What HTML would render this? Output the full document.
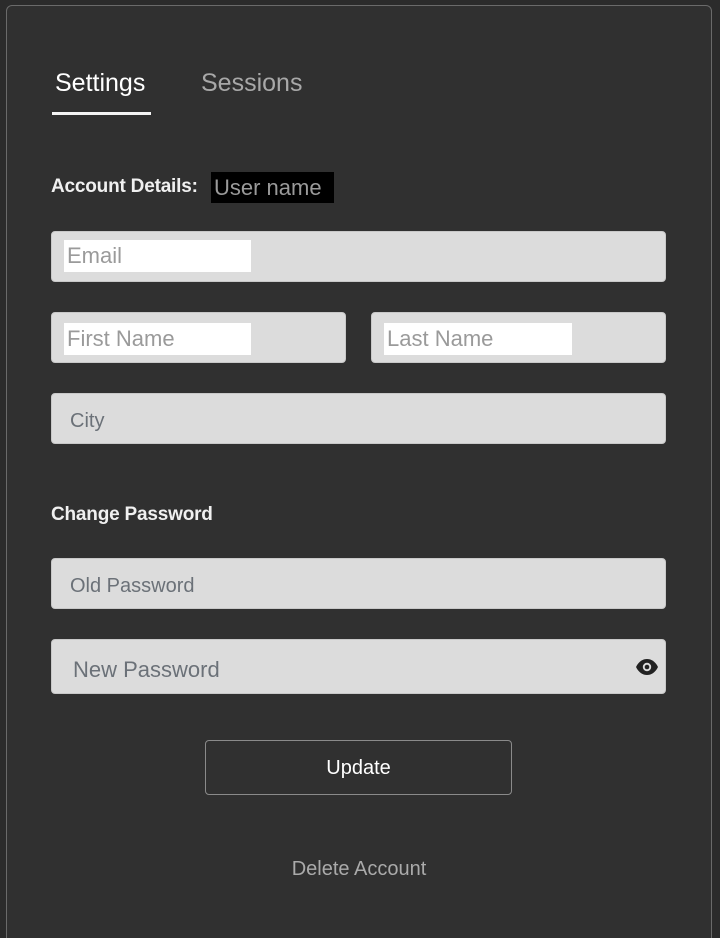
<!DOCTYPE html>
<html><head><meta charset="utf-8"><style>
*{margin:0;padding:0;box-sizing:border-box}
html,body{width:720px;height:938px;overflow:hidden}
body{background:#2b2b2b;font-family:"Liberation Sans",sans-serif;position:relative}
.frame{position:absolute;left:6px;top:5px;width:706px;height:945px;background:#303030;border:1px solid #6a6a6a;border-radius:6px}
.a{position:absolute}
.tab{font-size:25px;top:69px}
.inp{position:absolute;background:#dcdcdc;border:1px solid #c8c8c8;border-radius:4px}
.wb{position:absolute;background:#fff;color:#9a9a9a;font-size:22px;line-height:32px;padding-left:3px}
.ph{position:absolute;color:#6b7178;font-size:20px}
.lbl{position:absolute;color:#f0f0f0;font-weight:bold;font-size:19px;left:51px;letter-spacing:-0.2px}
</style></head><body>
<div class="frame"></div>
<div class="a tab" style="left:55px;color:#fff">Settings</div>
<div class="a" style="left:52px;top:112px;width:99px;height:3px;background:#f4f4f4"></div>
<div class="a tab" style="left:201px;color:#a8a8a8">Sessions</div>
<div class="lbl" style="top:176px">Account Details:</div>
<div class="a" style="left:211px;top:172px;width:123px;height:31px;background:#000;color:#9a9a9a;font-size:22px;line-height:31px;padding-left:3px">User name</div>
<div class="inp" style="left:51px;top:231px;width:615px;height:51px"></div>
<div class="wb" style="left:64px;top:240px;width:187px">Email</div>
<div class="inp" style="left:51px;top:312px;width:295px;height:51px"></div>
<div class="wb" style="left:64px;top:323px;width:187px">First Name</div>
<div class="inp" style="left:371px;top:312px;width:295px;height:51px"></div>
<div class="wb" style="left:384px;top:323px;width:188px">Last Name</div>
<div class="inp" style="left:51px;top:393px;width:615px;height:51px"></div>
<div class="ph" style="left:70px;top:410px">City</div>
<div class="lbl" style="top:504px">Change Password</div>
<div class="inp" style="left:51px;top:558px;width:615px;height:51px"></div>
<div class="ph" style="left:70px;top:575px">Old Password</div>
<div class="inp" style="left:51px;top:639px;width:615px;height:55px"></div>
<div class="ph" style="left:73px;top:657px;font-size:22px">New Password</div>
<svg class="a" style="left:635px;top:657px" width="24" height="20" viewBox="0 0 24 20"><path d="M1 10C4 4 8 2 12 2s8 2 11 8c-3 6-7 8-11 8S4 16 1 10z" fill="#222"/><circle cx="12" cy="10" r="4.2" fill="#dcdcdc"/><circle cx="12" cy="10" r="2.3" fill="#222"/></svg>
<div class="a" style="left:205px;top:740px;width:307px;height:55px;border:1px solid #8a8a8a;border-radius:4px;color:#fff;font-size:20px;text-align:center;line-height:55px">Update</div>
<div class="a" style="left:0;width:718px;top:858px;text-align:center;color:#aaa;font-size:20px">Delete Account</div>
</body></html>
